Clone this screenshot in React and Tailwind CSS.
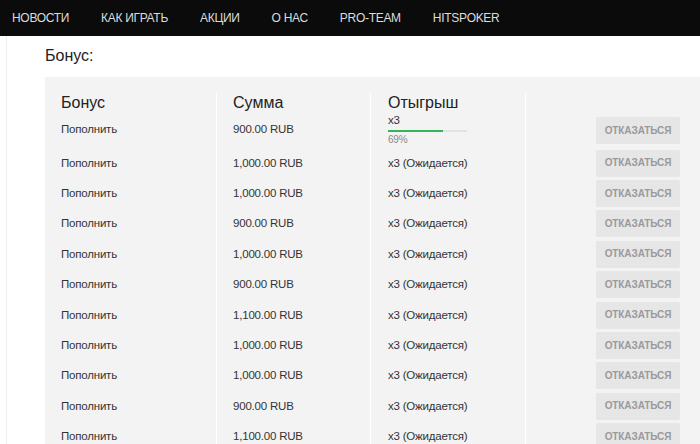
import React from "react";

const nav = ["НОВОСТИ", "КАК ИГРАТЬ", "АКЦИИ", "О НАС", "PRO-TEAM", "HITSPOKER"];
const rows = [
  "900.00 RUB",
  "1,000.00 RUB",
  "1,000.00 RUB",
  "900.00 RUB",
  "1,000.00 RUB",
  "900.00 RUB",
  "1,100.00 RUB",
  "1,000.00 RUB",
  "1,000.00 RUB",
  "900.00 RUB",
  "1,100.00 RUB",
];

function Btn() {
  return (
    <button className="ml-[70px] w-[84px] h-[27px] bg-[#e6e6e6] rounded-[2px] text-[10px] tracking-[-0.1px] font-bold text-[#9a9a9a] leading-none">
      ОТКАЗАТЬСЯ
    </button>
  );
}

export default function App() {
  return (
    <div className="w-[700px] h-[444px] overflow-hidden bg-white text-[#333]" style={{ fontFamily: '"Liberation Sans", Arial, sans-serif' }}>
      <div className="h-9 bg-[#0b0b0b] flex items-center pl-3 gap-[32px]">
        {nav.map((n) => (
          <span key={n} className="text-[12px] text-[#dcdcdc] tracking-[-0.3px]">{n}</span>
        ))}
      </div>
      <div className="ml-[6px] border-l border-[#efefef] pl-[38px] pt-[10px]">
        <div className="text-[16px] leading-[20px] h-[31px] text-[#222]">Бонус:</div>
        <div className="bg-[#f3f3f3] pt-4">
          <div className="grid grid-cols-[171px_154px_155px_1fr] text-[11.5px] tracking-[-0.2px]">
            <div className="pl-4 h-5 text-[16px] tracking-normal leading-5 text-[#222]">Бонус</div>
            <div className="pl-4 h-5 text-[16px] tracking-normal leading-5 text-[#222] border-l border-white">Сумма</div>
            <div className="pl-[17px] h-5 text-[16px] tracking-normal leading-5 text-[#222] border-l border-white">Отыгрыш</div>
            <div className="border-l border-white"></div>

            {rows.map((amt, i) => {
              const h = i === 0 ? "h-[35px]" : "h-[30.4px]";
              return (
                <React.Fragment key={i}>
                  <div className={`${h} pl-4 flex items-center`}>
                    <span className={i === 0 ? "-mt-[1px]" : ""}>Пополнить</span>
                  </div>
                  <div className={`${h} pl-4 flex items-center border-l border-white`}>
                    <span className={i === 0 ? "-mt-[1px]" : ""}>{amt}</span>
                  </div>
                  {i === 0 ? (
                    <div className={`${h} pl-[17px] border-l border-white flex flex-col`}>
                      <div className="h-[14px] leading-[14px]">x3</div>
                      <div className="mt-[3px] w-[79px] h-[2px] bg-[#e2e2e2]">
                        <div className="h-[2px] bg-[#34b55a]" style={{ width: "69%" }}></div>
                      </div>
                      <div className="mt-[2px] text-[10px] leading-[12px] text-[#8a8a8a]">69%</div>
                    </div>
                  ) : (
                    <div className={`${h} pl-[17px] flex items-center border-l border-white`}>x3 (Ожидается)</div>
                  )}
                  <div className={`${h} flex items-center border-l border-white`}>
                    <Btn />
                  </div>
                </React.Fragment>
              );
            })}
          </div>
        </div>
      </div>
    </div>
  );
}
